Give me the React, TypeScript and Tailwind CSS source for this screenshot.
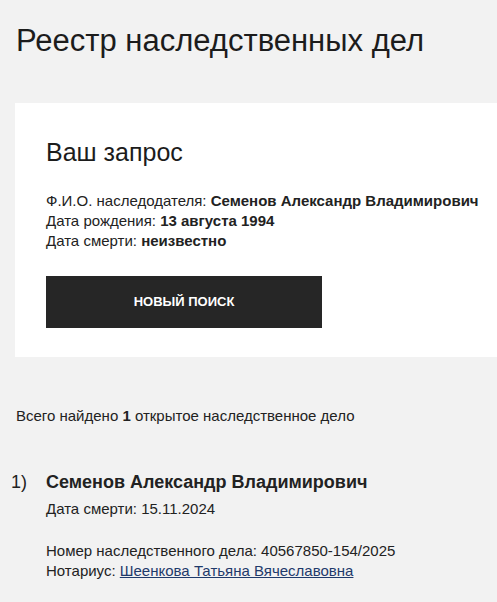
import React from 'react';

const font = { fontFamily: '"Liberation Sans", Arial, sans-serif' };

export default function App() {
    return (
        <div className="min-h-[602px] w-full overflow-hidden bg-[#f2f2f2] text-[#222222]" style={font}>
            <h1 className="pl-4 pt-[22px] text-[31px] leading-[38px] font-normal text-[#1c1c1c]">Реестр наследственных дел</h1>

            <div className="ml-[15px] mt-[43px] h-[254px] bg-white pl-[31px] pt-[34px]">
                <h2 className="text-[25px] leading-[30px] font-normal text-[#1c1c1c]">Ваш запрос</h2>
                <div className="mt-[24px] text-[15px] leading-[20px]">
                    <div>Ф.И.О. наследодателя: <b>Семенов Александр Владимирович</b></div>
                    <div>Дата рождения: <b>13 августа 1994</b></div>
                    <div>Дата смерти: <b>неизвестно</b></div>
                </div>
                <button className="mt-[25px] flex h-[52px] w-[276px] items-center justify-center bg-[#262626] text-[13px] font-bold text-white">
                    НОВЫЙ ПОИСК
                </button>
            </div>

            <p className="mt-[49px] pl-4 text-[15px] leading-[20px]">
                Всего найдено <b>1</b> открытое наследственное дело
            </p>

            <div className="mt-[44px] flex">
                <span className="w-[46px] pl-[11px] text-[18px] leading-[24px]">1)</span>
                <div>
                    <div className="text-[18px] leading-[24px] font-bold">Семенов Александр Владимирович</div>
                    <div className="mt-[5px] text-[15px] leading-[20px]">Дата смерти: 15.11.2024</div>
                    <div className="mt-[22px] text-[15px] leading-[20px]">Номер наследственного дела: 40567850-154/2025</div>
                    <div className="text-[15px] leading-[20px]">
                        Нотариус: <a href="#" className="text-[#1f3a6b] underline">Шеенкова Татьяна Вячеславовна</a>
                    </div>
                </div>
            </div>
        </div>
    );
}
